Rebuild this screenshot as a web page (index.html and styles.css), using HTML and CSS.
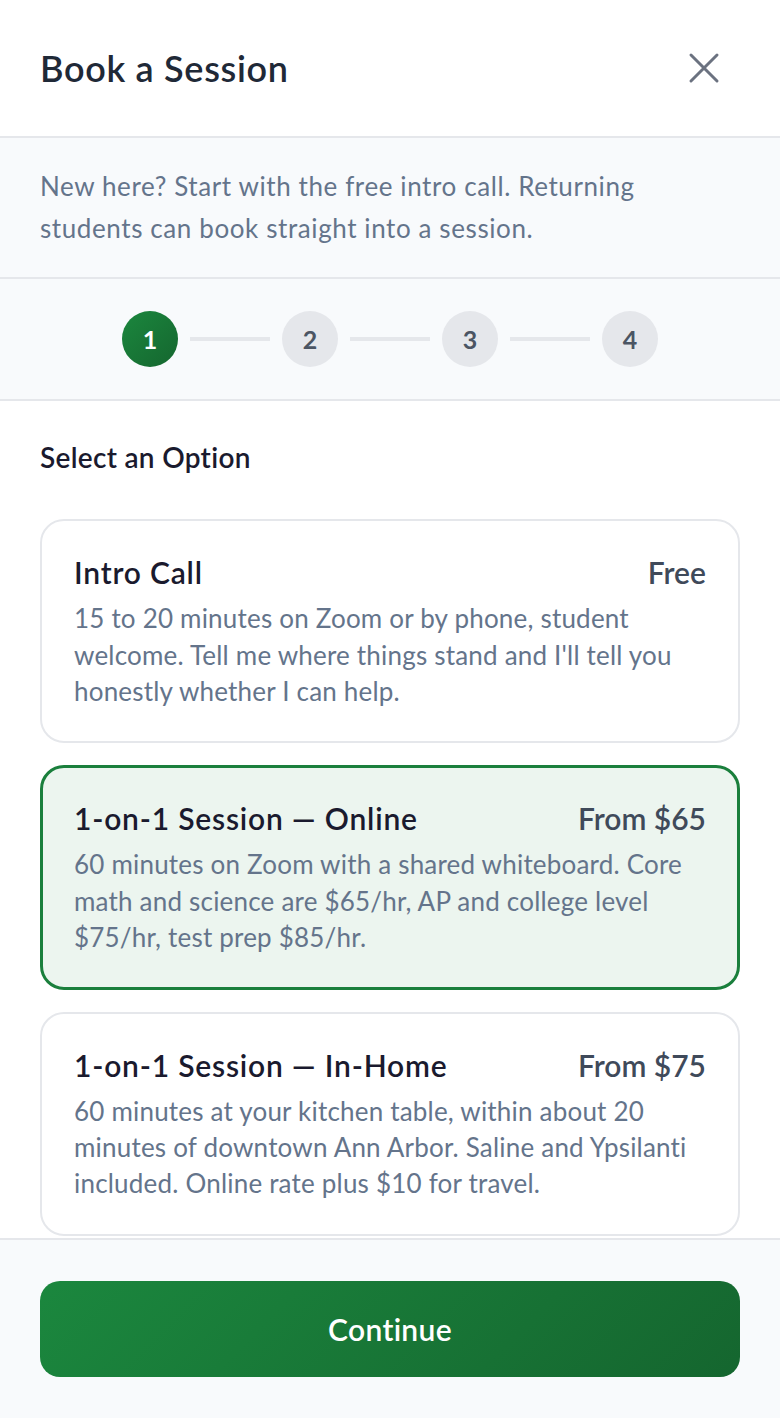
FILE: index.html
```html
<!DOCTYPE html>
<html lang="en">
<head>
    <meta charset="UTF-8" />
    <meta name="viewport" content="width=device-width, initial-scale=1.0"/>
    <title>Book a Session</title>
    <link rel="stylesheet" href="styles.css">
</head>
<body>
    <div class="modal">
        <div class="modal-header">
            <h1>Book a Session</h1>
            <button class="close-btn" aria-label="Close">
                <svg width="32" height="32" viewBox="0 0 32 32" fill="none" stroke="currentColor" stroke-width="3" stroke-linecap="round">
                    <path d="M3 3 L29 29 M29 3 L3 29" />
                </svg>
            </button>
        </div>

        <div class="intro">
            New here? Start with the free intro call. Returning students can book straight into a session.
        </div>

        <div class="stepper">
            <div class="step active">1</div>
            <div class="step-line"></div>
            <div class="step">2</div>
            <div class="step-line"></div>
            <div class="step">3</div>
            <div class="step-line"></div>
            <div class="step">4</div>
        </div>

        <div class="content">
            <h2>Select an Option</h2>
            <div class="options">
                <div class="option">
                    <div class="option-top">
                        <span class="option-title">Intro Call</span>
                        <span class="option-price">Free</span>
                    </div>
                    <p class="option-desc">15 to 20 minutes on Zoom or by phone, student welcome. Tell me where things stand and I'll tell you honestly whether I can help.</p>
                </div>
                <div class="option selected">
                    <div class="option-top">
                        <span class="option-title">1-on-1 Session — Online</span>
                        <span class="option-price">From $65</span>
                    </div>
                    <p class="option-desc">60 minutes on Zoom with a shared whiteboard. Core math and science are $65/hr, AP and college level $75/hr, test prep $85/hr.</p>
                </div>
                <div class="option">
                    <div class="option-top">
                        <span class="option-title">1-on-1 Session — In-Home</span>
                        <span class="option-price">From $75</span>
                    </div>
                    <p class="option-desc">60 minutes at your kitchen table, within about 20 minutes of downtown Ann Arbor. Saline and Ypsilanti included. Online rate plus $10 for travel.</p>
                </div>
            </div>
        </div>

        <div class="modal-footer">
            <button class="continue-btn">Continue</button>
        </div>
    </div>
</body>
</html>
```

FILE: styles.css
```css
:root {
    --green: #1a7f3c;
    --green-dark: #15662f;
    --border: #e5e7eb;
    --soft-bg: #f8fafc;
    --slate: #64748b;
    --ink: #1a1a2e;
}

* {
    box-sizing: border-box;
}

body {
    margin: 0;
    font-family: 'Lato', 'Open Sans', sans-serif;
    background-color: white;
}

.modal {
    display: flex;
    flex-direction: column;
    height: 100vh;
}

.modal-header {
    display: flex;
    align-items: center;
    justify-content: space-between;
    height: 138px;
    padding: 0 60px 0 40px;
    border-bottom: 2px solid var(--border);
    flex-shrink: 0;
}

.modal-header h1 {
    margin: 0;
    font-size: 36px;
    font-weight: 600;
    letter-spacing: 0.7px;
    color: #1f2937;
}

.close-btn {
    background: none;
    border: none;
    padding: 0;
    color: #6b7280;
    cursor: pointer;
    display: flex;
}

.intro {
    background-color: var(--soft-bg);
    padding: 28px 40px;
    font-size: 26px;
    line-height: 1.6;
    letter-spacing: 0.6px;
    color: var(--slate);
    border-bottom: 2px solid var(--border);
    flex-shrink: 0;
}

.stepper {
    display: flex;
    align-items: center;
    justify-content: center;
    gap: 12px;
    padding: 32px 0;
    background-color: var(--soft-bg);
    border-bottom: 2px solid var(--border);
    flex-shrink: 0;
}

.step {
    width: 56px;
    height: 56px;
    border-radius: 50%;
    background-color: var(--border);
    color: #4b5563;
    display: flex;
    align-items: center;
    justify-content: center;
    font-size: 25px;
    font-weight: 700;
}

.step.active {
    background: linear-gradient(135deg, #1b873e, var(--green-dark));
    color: white;
}

.step-line {
    width: 80px;
    height: 4px;
    background-color: var(--border);
}

.content {
    flex: 1;
    overflow: hidden;
    padding: 40px 40px 0;
}

.content h2 {
    margin: 0 0 46px;
    font-size: 28px;
    line-height: 32px;
    font-weight: 600;
    letter-spacing: 0.3px;
    color: var(--ink);
}

.options {
    display: flex;
    flex-direction: column;
    gap: 22px;
}

.option {
    border: 2px solid var(--border);
    border-radius: 24px;
    padding: 32px;
    background-color: white;
}

.option.selected {
    border: 3px solid var(--green);
    padding: 31px;
    background-color: #ecf5ef;
}

.option-top {
    display: flex;
    justify-content: space-between;
    align-items: baseline;
    line-height: 38px;
}

.option-title {
    font-size: 30px;
    font-weight: 600;
    letter-spacing: 0.8px;
    color: var(--ink);
}

.option-price {
    font-size: 30px;
    font-weight: 600;
    color: #3f4a5a;
}

.option-desc {
    margin: 9px 0 0;
    font-size: 26px;
    line-height: 1.4;
    letter-spacing: 0.2px;
    color: var(--slate);
}

.modal-footer {
    flex-shrink: 0;
    padding: 41px 40px;
    background-color: var(--soft-bg);
    border-top: 2px solid var(--border);
}

.continue-btn {
    width: 100%;
    height: 96px;
    border: none;
    border-radius: 20px;
    background: linear-gradient(135deg, #1b873e, var(--green-dark));
    color: white;
    font-family: inherit;
    font-size: 30px;
    font-weight: 600;
    letter-spacing: 0.3px;
    cursor: pointer;
}
```
